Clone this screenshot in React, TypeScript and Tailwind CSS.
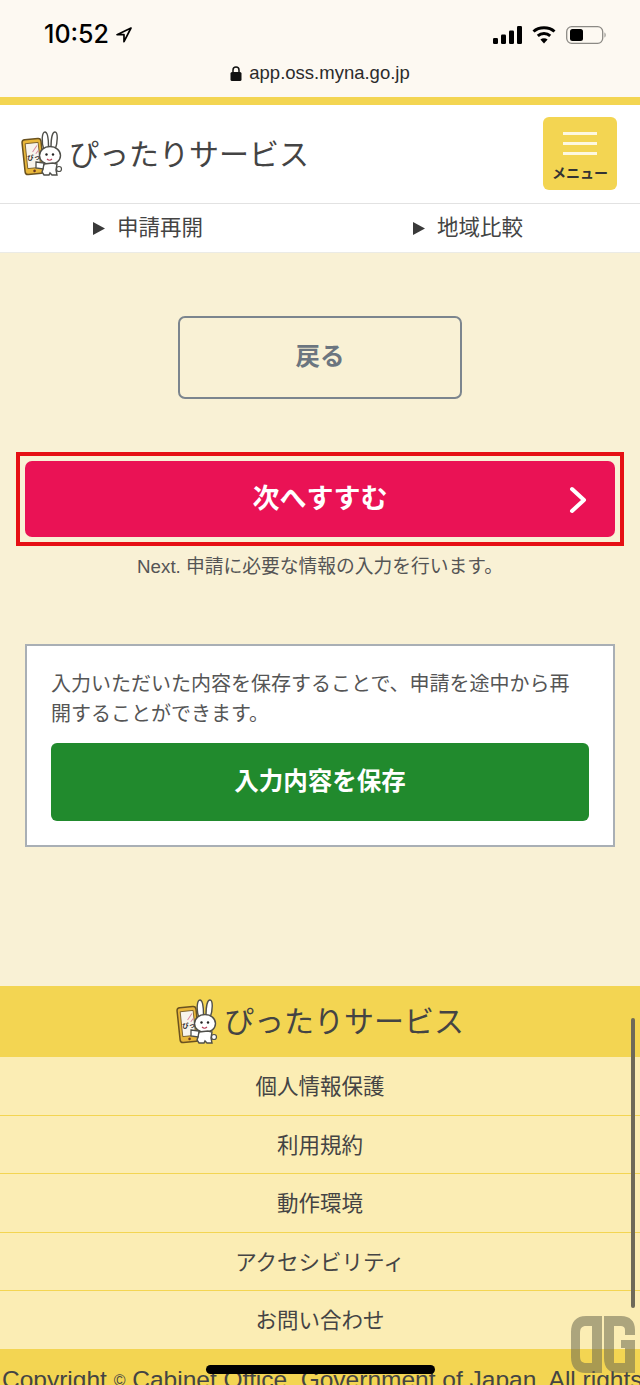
const JP = "font-['Liberation_Sans','Noto_Sans_CJK_JP',sans-serif]";

function Logo() {
  return (
    <svg width="42" height="46" viewBox="0 0 42 46" className="shrink-0">
      <g transform="rotate(-6 12 25)">
        <rect x="2.500" y="8" width="19" height="35" rx="3" fill="#e9b73a" stroke="#6a5220" strokeWidth="1.500" />
        <rect x="5.500" y="12" width="13" height="25" fill="#f8f4ec" stroke="#6a5220" strokeWidth="0.800" />
        <circle cx="12" cy="40" r="1.300" fill="#6b3a20" />
        <text x="6" y="29" fontSize="6.500" fontWeight="700" fill="#222" fontFamily="'Noto Sans CJK JP',sans-serif">ぴっ</text>
        <path d="M12 21l5-6M15 23l3-3" stroke="#d98aa0" strokeWidth="1" fill="none" />
      </g>
      <path d="M23 19C20 11 21 1 24 1c3 0 3.500 9 3.500 15M30 16c0-7 1-15 4-15 3 0 3 10 0 18" fill="#fff" stroke="#4f4f4a" strokeWidth="1.400" />
      <ellipse cx="29" cy="24.500" rx="10.500" ry="9" fill="#fff" stroke="#4f4f4a" strokeWidth="1.400" />
      <circle cx="25.500" cy="23.500" r="1.200" fill="#222" />
      <circle cx="32" cy="23.500" r="1.200" fill="#222" />
      <path d="M26 28c1.500 1.500 3.500 1.500 5 0" stroke="#b8405a" strokeWidth="1.100" fill="none" />
      <path d="M23 33c-1 3-1 6-2 8l2 3h5l1-2 2 2h5l-1-5 1-6-4-1z" fill="#fff" stroke="#4f4f4a" strokeWidth="1.400" />
      <path d="M15 31l8 1-1 6-7-1z" fill="#fff" stroke="#4f4f4a" strokeWidth="1.300" />
      <circle cx="38" cy="38" r="2.500" fill="#fff" stroke="#4f4f4a" strokeWidth="1.200" />
    </svg>
  );
}

function Tri() {
  return (
    <svg width="12" height="13" viewBox="0 0 12 13" className="shrink-0">
      <path d="M0 0L12 6.500L0 13z" fill="#3a3a3a" />
    </svg>
  );
}

const links = ["個人情報保護", "利用規約", "動作環境", "アクセシビリティ", "お問い合わせ"];

export default function App() {
  return (
    <div className={`relative h-[1385px] w-[640px] overflow-hidden bg-[#f9f1d5] text-[#3d3d3d] ${JP}`}>
      {/* browser chrome */}
      <div className="h-[97px] bg-[#fdf9f2] text-black">
        <div className="flex h-[69px] items-center justify-between pl-[44px] pr-[33px]">
          <div className="flex items-center gap-[6px]">
            <span className="font-['Inter',sans-serif] text-[25px] font-medium leading-none">10:52</span>
            <svg width="18" height="18" viewBox="0 0 18 18" fill="none" stroke="#000" strokeWidth="1.700" strokeLinejoin="round">
              <path d="M16 2L2 8.700h7v7z" />
            </svg>
          </div>
          <div className="flex items-center gap-[10px]">
            <svg width="29" height="18" viewBox="0 0 29 18" fill="#000">
              <rect x="0" y="12" width="5" height="6" rx="1.200" />
              <rect x="8" y="8.500" width="5" height="9.500" rx="1.200" />
              <rect x="16" y="4.500" width="5" height="13.500" rx="1.200" />
              <rect x="24" y="0" width="5" height="18" rx="1.200" />
            </svg>
            <svg width="24" height="19" viewBox="0 0 24 19" fill="none" stroke="#000" strokeWidth="3">
              <path d="M1.500 6.500C7 1.500 17 1.500 22.500 6.500" />
              <path d="M5.800 10.800C9.200 7.800 14.800 7.800 18.200 10.800" />
              <path d="M12 18.500L8.400 14.500C10.400 12.800 13.600 12.800 15.600 14.500z" fill="#000" stroke="none" />
            </svg>
            <svg width="41" height="18" viewBox="0 0 41 18" fill="none">
              <rect x="0.700" y="0.700" width="36" height="16.600" rx="5" stroke="#8c8a85" strokeWidth="1.300" />
              <rect x="4" y="3" width="13" height="12" rx="2.500" fill="#000" />
              <path d="M38.500 6.500c1.500 .6 1.500 4.400 0 5z" fill="#8c8a85" />
            </svg>
          </div>
        </div>
        <div className="-mt-[5px] flex items-center justify-center gap-[7px] text-[18.500px] leading-none text-[#2b2b2b]">
          <svg width="12" height="15" viewBox="0 0 12 15">
            <path d="M3 6.500V4a3 3 0 0 1 6 0v2.500" fill="none" stroke="#111" strokeWidth="1.500" />
            <rect x="0.500" y="6" width="11" height="9" rx="1.500" fill="#111" />
          </svg>
          <span className="font-['Liberation_Sans',sans-serif]">app.oss.myna.go.jp</span>
        </div>
      </div>
      <div className="h-[8px] bg-[#f3d552]" />

      {/* header */}
      <header className="flex h-[99px] items-center justify-between border-b border-[#e2e2e2] bg-white pl-[21px] pr-[23px]">
        <div className="flex items-center gap-[6px]">
          <Logo />
          <span className="pt-[2px] text-[30px] leading-none text-[#444]">ぴったりサービス</span>
        </div>
        <div className="mb-[1px] flex h-[73px] w-[74px] flex-col items-center rounded-[6px] bg-[#f3d552] pt-[15px]">
          <div className="flex w-[34px] flex-col gap-[7px]">
            <span className="h-[3px] bg-[#fdf8e0]" />
            <span className="h-[3px] bg-[#fdf8e0]" />
            <span className="h-[3px] bg-[#fdf8e0]" />
          </div>
          <span className="mt-[11px] text-[14px] font-bold leading-none text-[#333]">メニュー</span>
        </div>
      </header>

      {/* sub nav */}
      <nav className="grid h-[49px] grid-cols-2 border-b border-[#ebebe6] bg-white text-[21.500px] text-[#444]">
        <div className="flex items-center justify-center gap-[12px] pr-[24px]">
          <Tri />
          <span>申請再開</span>
        </div>
        <div className="flex items-center justify-center gap-[12px] pr-[24px]">
          <Tri />
          <span>地域比較</span>
        </div>
      </nav>

      {/* main */}
      <main className="flex h-[733px] flex-col items-center pt-[63px]">
        <button className="flex h-[83px] w-[284px] items-center justify-center rounded-[7px] border-2 border-[#7c858e] text-[24.500px] font-bold text-[#6b757f]">
          戻る
        </button>

        <div className="mt-[53px] h-[94px] w-[608px] border-[4px] border-[#e60f14] p-[5px]">
          <button className="relative flex h-[76px] w-full items-center justify-center rounded-[7px] bg-[#ea1255] text-[27px] font-bold text-white">
            次へすすむ
            <svg width="18" height="28" viewBox="0 0 18 28" fill="none" stroke="#fff" strokeWidth="4" strokeLinecap="round" strokeLinejoin="round" className="absolute right-[28px] top-[25px]">
              <path d="M3 3l12 11L3 25" />
            </svg>
          </button>
        </div>
        <p className="mt-[7px] text-[18.750px] leading-[28px] text-[#555]">Next. 申請に必要な情報の入力を行います。</p>

        <section className="mt-[63px] h-[203px] w-[590px] border-2 border-[#a9afb5] bg-white px-[24px] pt-[23px]">
          <p className="text-[20px] leading-[30px] text-[#555]">
            入力いただいた内容を保存することで、申請を途中から再開することができます。
          </p>
          <button className="mt-[14px] flex h-[78px] w-full items-center justify-center rounded-[6px] bg-[#218a2d] text-[24.500px] font-bold text-white">
            入力内容を保存
          </button>
        </section>
      </main>

      {/* footer */}
      <footer className="bg-[#f3d552]">
        <div className="flex h-[71px] items-center justify-center gap-[6px]">
          <Logo />
          <span className="text-[30px] leading-none text-[#444]">ぴったりサービス</span>
        </div>
        <ul className="bg-[#fbedb4] text-[21.500px] text-[#444]">
          {links.map((l) => (
            <li key={l} className="flex h-[58.500px] items-center justify-center border-b border-[#f3d552] pt-[3px]">
              {l}
            </li>
          ))}
        </ul>
        <p className="whitespace-nowrap pl-[2px] pt-[15px] font-['Liberation_Sans',sans-serif] text-[24.500px] leading-[30px] text-[#444]">
          Copyright <span className="text-[16px] align-[2px]">©</span> Cabinet Office, Government of Japan. All rights
        </p>
      </footer>

      {/* overlays */}
      <div className="absolute left-[631px] top-[1018px] h-[290px] w-[4px] rounded-full bg-[#6e6a58]" />
      <div className="absolute left-[206px] top-[1365px] h-[9px] w-[229px] rounded-full bg-black" />
      <svg width="64" height="57" viewBox="0 0 64 57" className="absolute left-[571px] top-[1316px]" fill="#6b6a50" fillOpacity="0.55" fillRule="evenodd">
        <path d="M31 0H15C5 0 0 6 0 16V41C0 51 5 57 15 57H31ZM21 10H15C11 10 9 12 9 17V40C9 45 11 47 15 47H21Z" />
        <path d="M33 0H50C59 0 64 5 64 14V19H54V14C54 11 52 10 50 10H43V47H54V32H50V24H64V57H48C38 57 33 52 33 42Z" />
      </svg>
    </div>
  );
}
